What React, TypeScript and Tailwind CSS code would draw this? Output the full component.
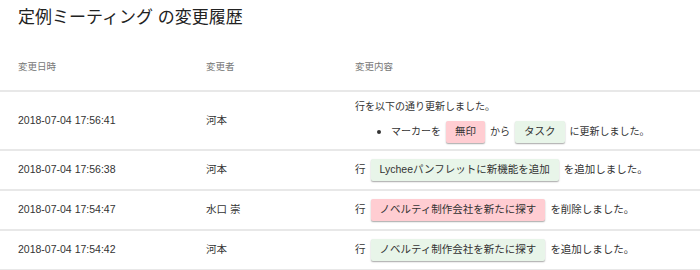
import type { ReactNode } from "react";

type Tone = "add" | "remove";

function Chip({ tone, children }: { tone: Tone; children: ReactNode }) {
  return (
    <span
      className={
        "mx-[5px] inline-flex h-[22px] items-center rounded-[2px] px-[9px] text-[10.5px] shadow-[0_1px_1.5px_rgba(0,0,0,0.35)] " +
        (tone === "add" ? "bg-[#e8f5e9]" : "bg-[#ffcdd2]")
      }
    >
      {children}
    </span>
  );
}

const rows: { at: string; who: string; body: ReactNode }[] = [
  {
    at: "2018-07-04 17:56:38",
    who: "河本",
    body: (
      <>
        行<Chip tone="add">Lycheeパンフレットに新機能を追加</Chip>を追加しました。
      </>
    ),
  },
  {
    at: "2018-07-04 17:54:47",
    who: "水口 崇",
    body: (
      <>
        行<Chip tone="remove">ノベルティ制作会社を新たに探す</Chip>を削除しました。
      </>
    ),
  },
  {
    at: "2018-07-04 17:54:42",
    who: "河本",
    body: (
      <>
        行<Chip tone="add">ノベルティ制作会社を新たに探す</Chip>を追加しました。
      </>
    ),
  },
];

export default function App() {
  return (
    <div className="h-[270px] w-[700px] overflow-hidden bg-white font-['Liberation_Sans','Noto_Sans_CJK_JP',sans-serif] text-[#333]">
      <h1 className="px-[18px] pt-[7px] text-[17px] leading-[22px] text-[#222]">定例ミーティング の変更履歴</h1>

      <table className="mt-[15px] w-full border-collapse text-[10.5px]">
        <thead>
          <tr className="h-[47px] border-b-2 border-[#e8e8e8] text-left text-[9.5px] text-[#777]">
            <th className="w-[206px] pl-[18px] font-normal">変更日時</th>
            <th className="w-[149px] font-normal">変更者</th>
            <th className="font-normal">変更内容</th>
          </tr>
        </thead>
        <tbody>
          <tr className="h-[59px] border-b-2 border-[#e8e8e8]">
            <td className="pl-[18px]">2018-07-04 17:56:41</td>
            <td>河本</td>
            <td className="pt-[6px] pb-[5px] text-[10px]">
              <div className="leading-[14px]">行を以下の通り更新しました。</div>
              <div className="mt-[7px] flex items-center">
                <span className="ml-[22px] mr-[10px] h-[4px] w-[4px] rounded-full bg-[#333]" />
                マーカーを<Chip tone="remove">無印</Chip>から<Chip tone="add">タスク</Chip>に更新しました。
              </div>
            </td>
          </tr>
          {rows.map((r) => (
            <tr key={r.at} className="h-[40px] border-b-2 border-[#e8e8e8]">
              <td className="pl-[18px]">{r.at}</td>
              <td>{r.who}</td>
              <td>
                <div className="flex items-center">{r.body}</div>
              </td>
            </tr>
          ))}
        </tbody>
      </table>
    </div>
  );
}
